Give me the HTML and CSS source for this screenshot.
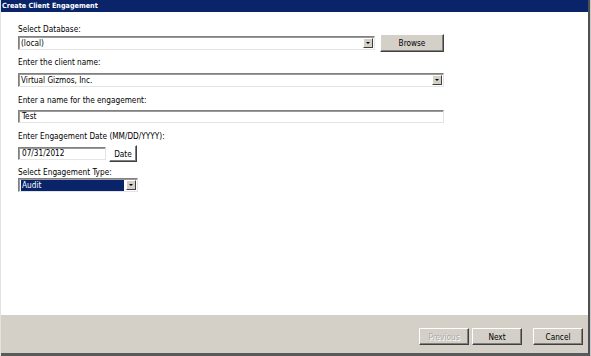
FILE: index.html
```html
<!DOCTYPE html>
<html lang="en">
<head>
  <meta charset="UTF-8" />
  <title>Create Client Engagement</title>
  <link rel="stylesheet" href="styles.css">
</head>
<body>
  <div class="ventana">
    <div class="marco">
      <div class="titulo">Create Client Engagement</div>

      <div class="contenido">
        <div class="campo campo-db">
          <label>Select Database:</label>
          <div class="fila">
            <div class="combo combo-db">
              <span class="valor">(local)</span>
              <span class="flecha"></span>
            </div>
            <button class="btn btn-browse">Browse</button>
          </div>
        </div>

        <div class="campo campo-cliente">
          <label>Enter the client name:</label>
          <div class="combo combo-cliente">
            <span class="valor">Virtual Gizmos, Inc.</span>
            <span class="flecha"></span>
          </div>
        </div>

        <div class="campo campo-nombre">
          <label>Enter a name for the engagement:</label>
          <div class="texto texto-nombre">Test</div>
        </div>

        <div class="campo campo-fecha">
          <label>Enter Engagement Date (MM/DD/YYYY):</label>
          <div class="fila fila-fecha">
            <div class="texto texto-fecha">07/31/2012</div>
            <button class="btn btn-fecha">Date</button>
          </div>
        </div>

        <div class="campo campo-tipo">
          <label>Select Engagement Type:</label>
          <div class="combo combo-tipo">
            <span class="valor seleccionado">Audit</span>
            <span class="flecha"></span>
          </div>
        </div>
      </div>

      <div class="pie">
        <button class="btn btn-pie" disabled>Previous</button>
        <button class="btn btn-pie">Next</button>
        <button class="btn btn-pie btn-cancel">Cancel</button>
      </div>
    </div>
  </div>
</body>
</html>
```

FILE: styles.css
```css
body {
  margin: 0;
  font-family: "DejaVu Sans Condensed", "Liberation Sans", sans-serif;
  font-size: 8.2px;
  color: #000;
  background: #fff;
}
.ventana {
  width: 591px;
  height: 356px;
  box-sizing: border-box;
  border-right: 1px solid #c8c8c8;
  border-left: 1px solid #e4e2dc;
}
.marco {
  height: 100%;
  box-sizing: border-box;
  display: flex;
  flex-direction: column;
  border-right: 2px solid #505050;
  border-bottom: 3px solid #5a5a5a;
}
.titulo {
  height: 12px;
  line-height: 12px;
  background: #0a246a;
  color: #fff;
  font-weight: bold;
  font-size: 7.2px;
  padding-left: 1px;
}
.contenido {
  flex: 1;
  background: #fff;
  padding: 12px 0 0 17px;
}
.campo label {
  display: block;
  height: 10px;
  line-height: 10px;
}
.campo-cliente { margin-top: 5px; }
.campo-nombre { margin-top: 8px; }
.campo-fecha { margin-top: 8px; }
.campo-tipo { margin-top: 5px; }

.fila {
  display: flex;
  align-items: center;
  gap: 5px;
}
.fila-fecha {
  margin-top: 4px;
  gap: 3px;
}
.combo,
.texto {
  box-sizing: border-box;
  border: 1px solid;
  border-color: #808080 #e4e4e4 #e4e4e4 #808080;
  box-shadow: inset 1px 1px 0 #9a9a9a;
  background: #fff;
  display: flex;
  align-items: center;
  padding-left: 2px;
}
.combo {
  height: 14px;
  padding-right: 1px;
}
.texto {
  height: 13px;
  line-height: 11px;
  padding-left: 3px;
}
.combo .valor {
  flex: 1;
  line-height: 11px;
}
.combo .valor.seleccionado {
  background: #0a246a;
  color: #fff;
  height: 11px;
  margin-right: 2px;
  padding-left: 1px;
}
.flecha {
  width: 10px;
  height: 10px;
  background: #d4d0c8;
  box-sizing: border-box;
  border: 1px solid;
  border-color: #fff #404040 #404040 #fff;
  position: relative;
}
.flecha::after {
  content: "";
  position: absolute;
  left: 2px;
  top: 3px;
  border-left: 2px solid transparent;
  border-right: 2px solid transparent;
  border-top: 2px solid #000;
}
.combo-db { width: 357px; }
.combo-cliente { width: 426px; margin-top: 6px; }
.texto-nombre { width: 426px; margin-top: 5px; }
.texto-fecha { width: 88px; }
.combo-tipo { width: 120px; margin-top: 1px; }

.btn {
  font-family: inherit;
  font-size: 8.2px;
  background: #d4d0c8;
  color: #000;
  border: 1px solid;
  border-color: #fff #404040 #404040 #fff;
  box-shadow: inset -1px -1px 0 #808080;
  padding: 0;
  margin: 0;
}
.btn-browse {
  width: 64px;
  height: 18px;
}
.btn-fecha {
  width: 28px;
  height: 17px;
  background: #fff;
}
.pie {
  height: 38px;
  background: #d4d0c8;
  display: flex;
  justify-content: flex-end;
  align-items: flex-start;
  padding: 13px 5px 0 0;
  box-sizing: border-box;
  gap: 3px;
}
.btn-pie {
  width: 50px;
  height: 17px;
}
.btn-pie[disabled] {
  color: #a8a8a8;
  text-shadow: 1px 1px 0 #fff;
}
.btn-cancel {
  margin-left: 8px;
}
```
